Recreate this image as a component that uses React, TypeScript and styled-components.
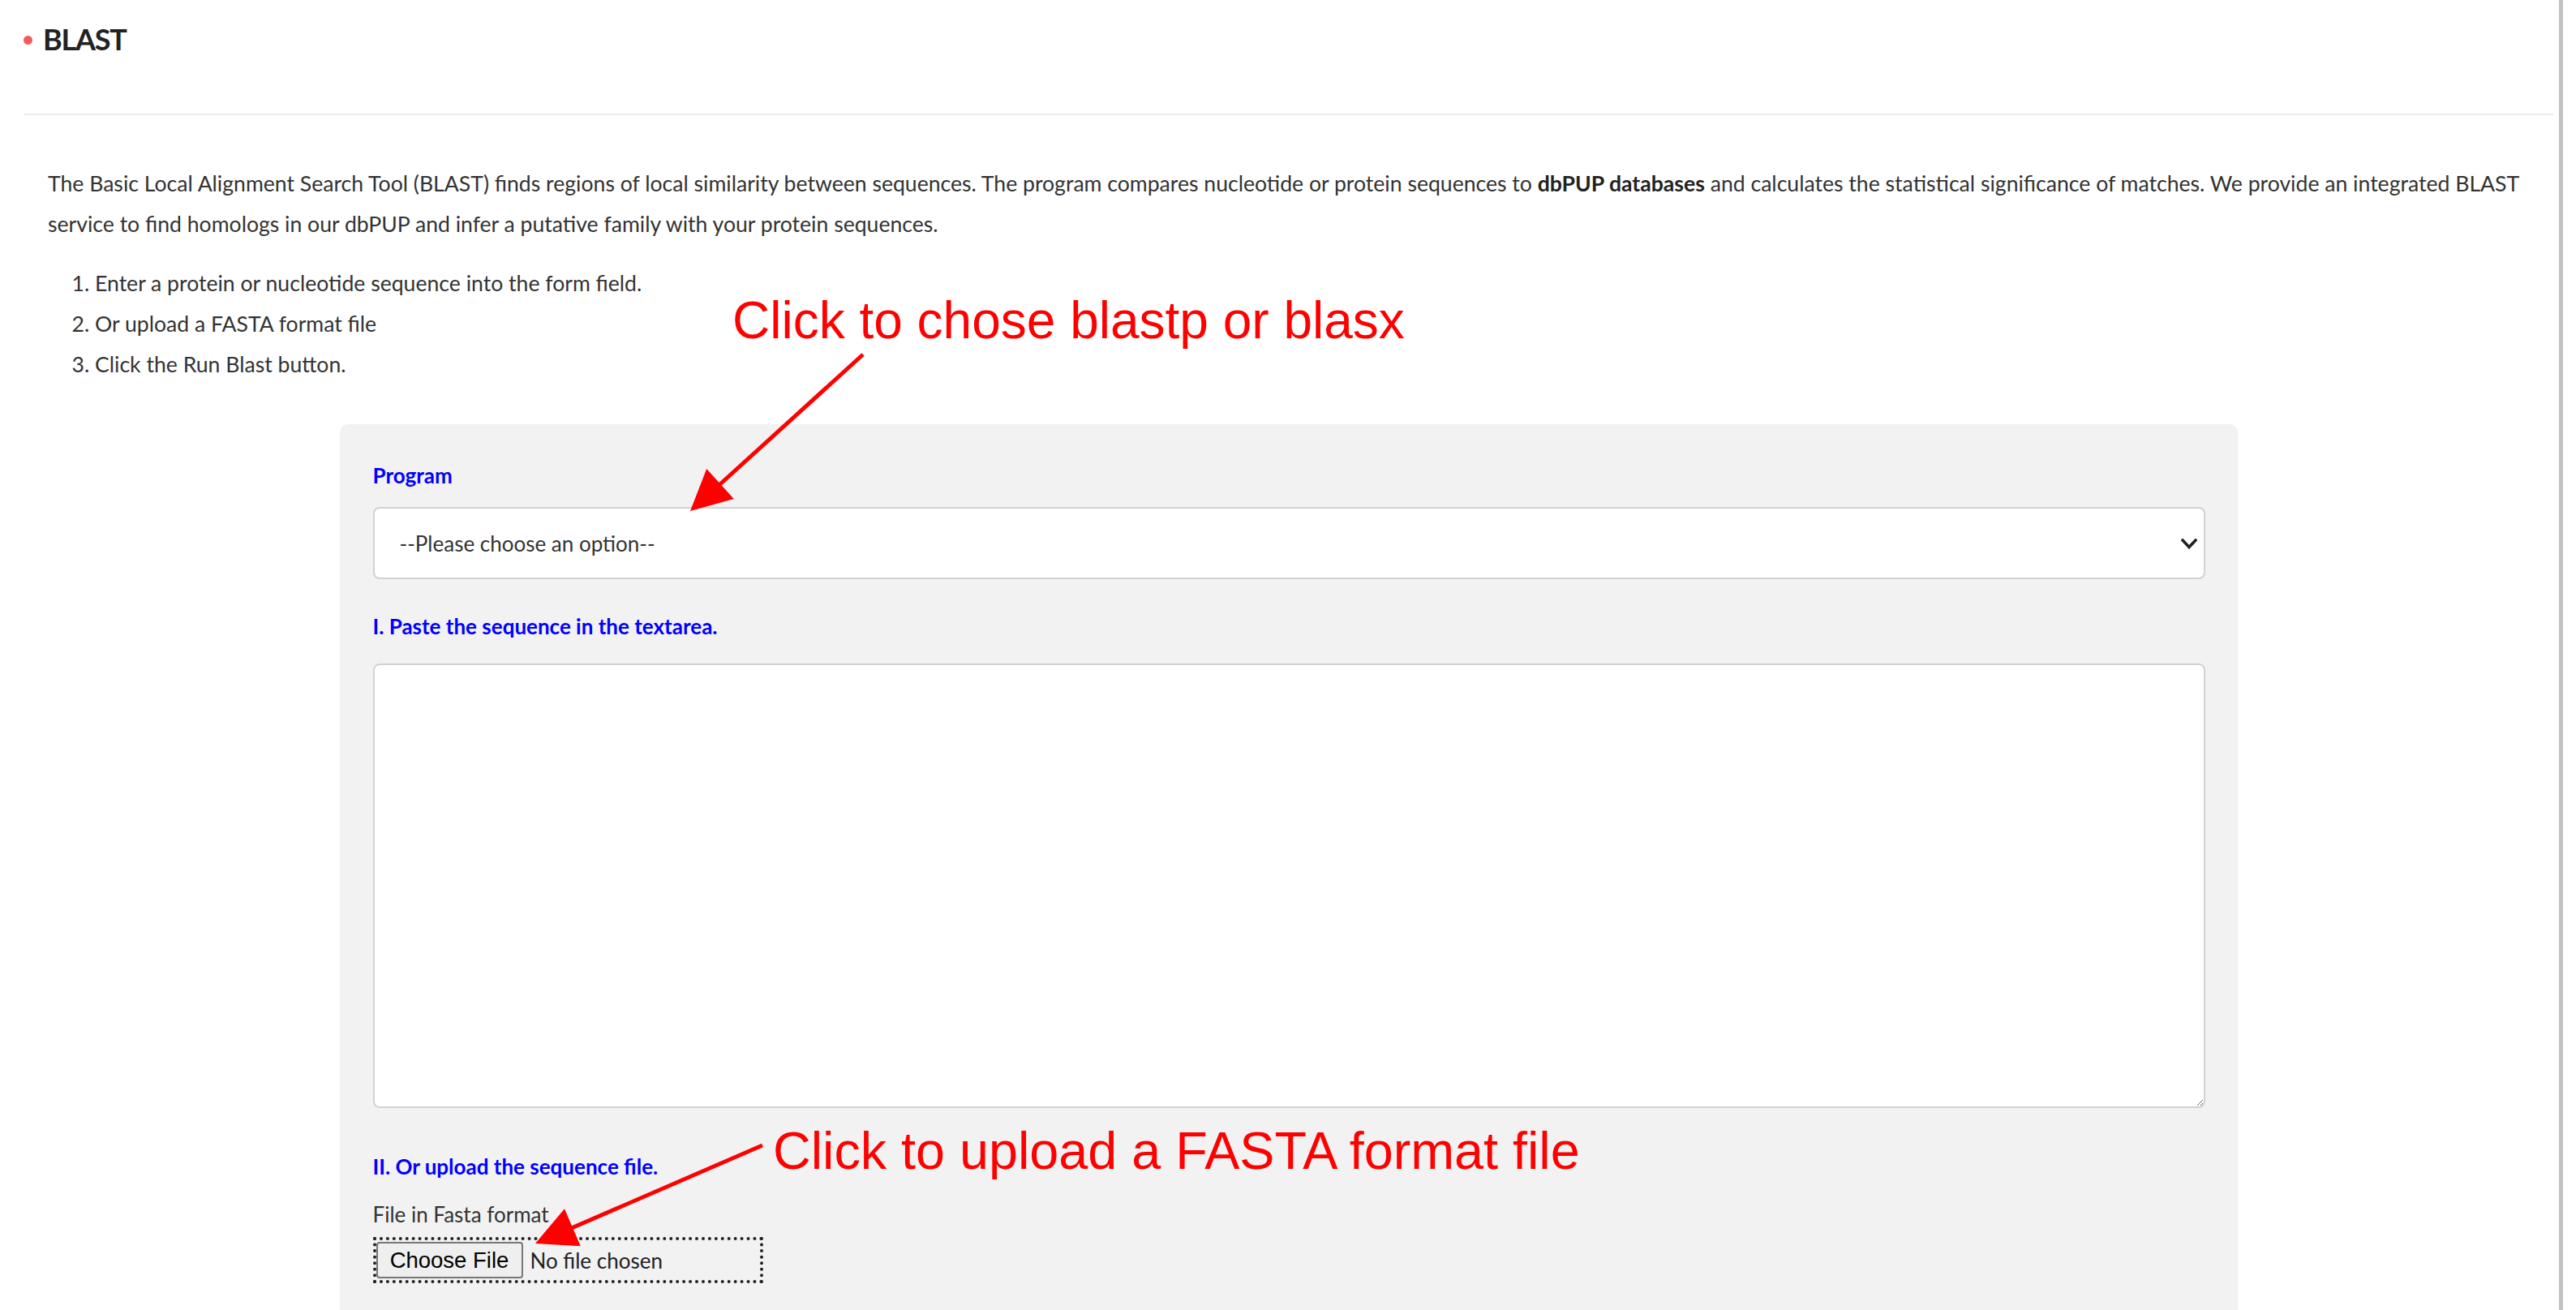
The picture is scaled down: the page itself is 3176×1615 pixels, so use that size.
import React from "react";
import styled, { createGlobalStyle } from "styled-components";

const GlobalStyle = createGlobalStyle`
  html, body { margin: 0; padding: 0; background: #fff; }
  body {
    font-family: Lato, "Noto Sans", "Liberation Sans", sans-serif;
    color: #333;
  }
  * { box-sizing: border-box; }
`;

const Page = styled.div`
  position: relative;
  width: 3160px;
  min-height: 1615px;
  border-right: 5px solid #c1c1c1;
  overflow: hidden;
`;

const Header = styled.header`
  margin: 0 7px 0 29px;
  height: 142px;
  padding-top: 27px;
  border-bottom: 2px solid #ececec;
  display: flex;
  align-items: flex-start;
`;

const HeaderRow = styled.div`
  display: flex;
  align-items: center;
  gap: 13px;
  height: 43px;
`;

const Dot = styled.span`
  width: 11px;
  height: 11px;
  border-radius: 50%;
  background: #f65a5a;
  margin-top: 2px;
`;

const Title = styled.h1`
  margin: 0;
  font-size: 36px;
  line-height: 43px;
  font-weight: 700;
  letter-spacing: -1.2px;
  color: #222;
`;

const Main = styled.main`
  padding: 59px 37px 0 59px;
`;

const Intro = styled.p`
  margin: 0;
  font-size: 26.6px;
  line-height: 50px;
  color: #333;

  b {
    font-weight: 700;
    color: #222;
  }
`;

const Steps = styled.ol`
  margin: 23px 0 0;
  padding-left: 58px;
  font-size: 26.6px;
  line-height: 50px;
  color: #333;
`;

const Panel = styled.section`
  width: 2340px;
  margin: 49px auto 0;
  padding: 45px 40px 80px 41px;
  background: #f2f2f2;
  border-radius: 10px;
  display: flex;
  flex-direction: column;
`;

const FieldLabel = styled.label<{ $gap: number }>`
  display: block;
  margin-top: ${(p) => p.$gap}px;
  font-size: 26px;
  line-height: 36px;
  font-weight: 700;
  color: #0000ff;
`;

const PlainLabel = styled.div<{ $gap: number }>`
  margin-top: ${(p) => p.$gap}px;
  font-size: 26px;
  line-height: 36px;
  color: #333;
`;

const SelectWrap = styled.div`
  position: relative;
  margin-top: 21px;
  height: 89px;
`;

const Select = styled.select`
  width: 100%;
  height: 100%;
  appearance: none;
  -webkit-appearance: none;
  background: #fff;
  border: 2px solid #d2d2d2;
  border-radius: 8px;
  padding: 0 60px 0 31px;
  font-family: Lato, "Noto Sans", sans-serif;
  font-size: 26px;
  color: #333;
  outline: none;
`;

const Chevron = styled.svg`
  position: absolute;
  right: 10px;
  top: 39px;
  width: 20px;
  height: 13px;
  pointer-events: none;
`;

const TextArea = styled.textarea`
  display: block;
  width: 100%;
  height: 548px;
  margin-top: 28px;
  background: #fff;
  border: 2px solid #d2d2d2;
  border-radius: 8px;
  resize: vertical;
  font-family: Lato, "Noto Sans", sans-serif;
  font-size: 26px;
  padding: 12px 20px;
  outline: none;
`;

const FileBox = styled.div`
  display: flex;
  align-items: center;
  gap: 9px;
  width: 481px;
  height: 57px;
  margin-top: 10px;
  border: 4px dotted #222;
`;

const FileButton = styled.button`
  width: 181px;
  height: 45px;
  padding: 0;
  background: #efefef;
  border: 2px solid #767676;
  border-radius: 4px;
  font-family: "Liberation Sans", Arial, sans-serif;
  font-size: 27.5px;
  color: #000;
`;

const FileStatus = styled.span`
  font-size: 26px;
  color: #222;
`;

const Note = styled.div<{ $top: number; $left: number; $size: number }>`
  position: absolute;
  top: ${(p) => p.$top}px;
  left: ${(p) => p.$left}px;
  font-family: "Liberation Sans", Arial, sans-serif;
  font-size: ${(p) => p.$size}px;
  line-height: 64px;
  color: #ff0000;
  white-space: nowrap;
`;

const Arrows = styled.svg`
  position: absolute;
  left: 0;
  top: 0;
  width: 3160px;
  height: 1615px;
  pointer-events: none;
`;

export default function App() {
  return (
    <>
      <GlobalStyle />
      <Page>
        <Header>
          <HeaderRow>
            <Dot />
            <Title>BLAST</Title>
          </HeaderRow>
        </Header>
        <Main>
          <Intro>
            The Basic Local Alignment Search Tool (BLAST) finds regions of local similarity between
            sequences. The program compares nucleotide or protein sequences to <b>dbPUP databases</b>{" "}
            and calculates the statistical significance of matches. We provide an integrated BLAST
            service to find homologs in our dbPUP and infer a putative family with your protein
            sequences.
          </Intro>
          <Steps>
            <li>Enter a protein or nucleotide sequence into the form field.</li>
            <li>Or upload a FASTA format file</li>
            <li>Click the Run Blast button.</li>
          </Steps>
          <Panel>
            <FieldLabel $gap={0}>Program</FieldLabel>
            <SelectWrap>
              <Select defaultValue="">
                <option value="">--Please choose an option--</option>
                <option value="blastp">blastp</option>
                <option value="blastx">blastx</option>
              </Select>
              <Chevron viewBox="0 0 20 13">
                <polyline
                  points="2,2 10,10.5 18,2"
                  fill="none"
                  stroke="#222"
                  strokeWidth="3.6"
                  strokeLinecap="square"
                />
              </Chevron>
            </SelectWrap>
            <FieldLabel $gap={40}>I. Paste the sequence in the textarea.</FieldLabel>
            <TextArea />
            <FieldLabel $gap={54}>II. Or upload the sequence file.</FieldLabel>
            <PlainLabel $gap={23}>File in Fasta format</PlainLabel>
            <FileBox>
              <FileButton type="button">Choose File</FileButton>
              <FileStatus>No file chosen</FileStatus>
            </FileBox>
          </Panel>
        </Main>
        <Note $top={363} $left={903} $size={64}>Click to chose blastp or blasx</Note>
        <Note $top={1387} $left={953} $size={64.7}>Click to upload a FASTA format file</Note>
        <Arrows viewBox="0 0 3160 1615">
          <line x1="1064" y1="437" x2="880" y2="604" stroke="#ff0000" strokeWidth="5" />
          <polygon points="851,630 904.8,614.9 871.2,577.9" fill="#ff0000" />
          <line x1="940" y1="1412" x2="700" y2="1516" stroke="#ff0000" strokeWidth="5" />
          <polygon points="660,1533 715.8,1536.2 696,1490.2" fill="#ff0000" />
        </Arrows>
      </Page>
    </>
  );
}
